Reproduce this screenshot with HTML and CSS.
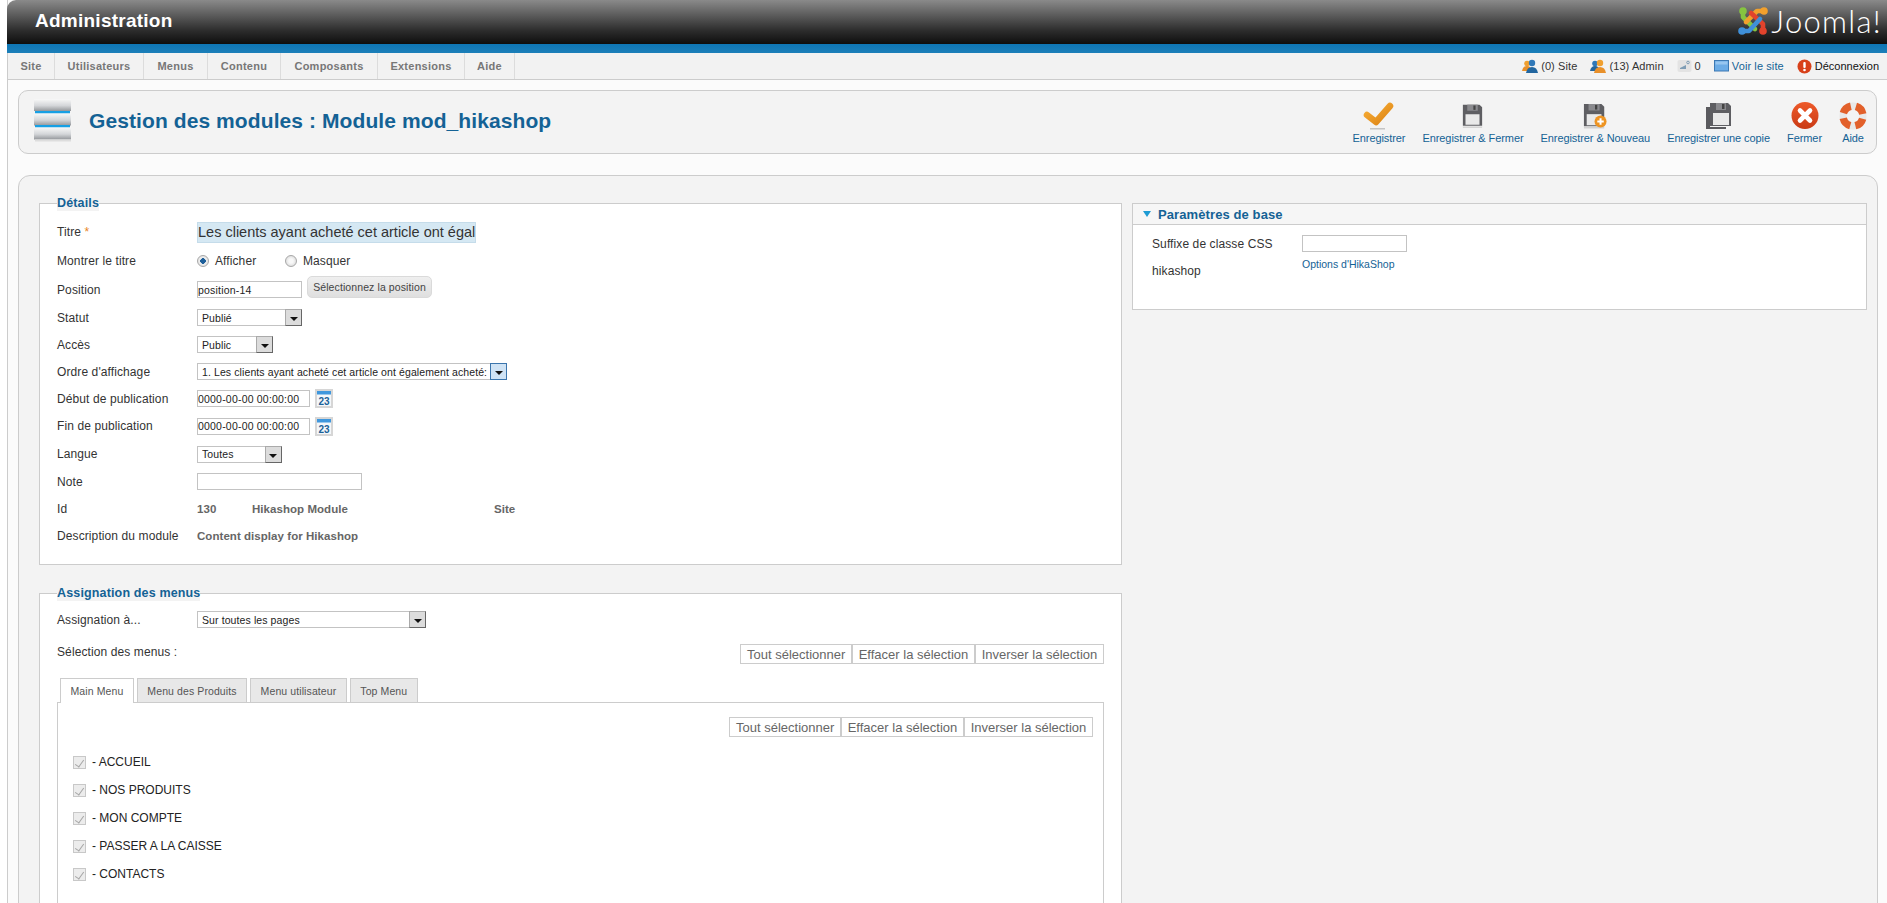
FILE: index.html
```html
<!DOCTYPE html>
<html lang="fr">
<head>
<meta charset="utf-8">
<title>Administration</title>
<link rel="stylesheet" href="styles.css">
</head>
<body>
<div class="page">
  <header class="top">
    <h1 class="brand">Administration</h1>
    <div class="logo">
      <svg class="logo-mark" width="32" height="30" viewBox="0 0 32 30" fill="none" stroke-width="4.6" stroke-linecap="round" stroke-linejoin="round">
        <path d="M6 5 V11 L18 23" stroke="#86c440"/>
        <path d="M27 5 H20 L9 16" stroke="#f2a02c"/>
        <path d="M26 25 V18 L14 7" stroke="#e2432c"/>
        <path d="M5 25 H12 L23 13" stroke="#3f90d9"/>
        <circle cx="6" cy="5" r="3.8" fill="#86c440"/>
        <circle cx="27" cy="5" r="3.8" fill="#f2a02c"/>
        <circle cx="5" cy="25" r="3.8" fill="#3f90d9"/>
        <circle cx="26" cy="25" r="3.8" fill="#e2432c"/>
      </svg>
      <span class="logo-text">Joomla!</span>
    </div>
  </header>
  <div class="stripe"></div>
  <nav class="menubar">
    <ul class="menu">
      <li>Site</li><li>Utilisateurs</li><li>Menus</li><li>Contenu</li><li>Composants</li><li>Extensions</li><li>Aide</li>
    </ul>
    <div class="status">
      <span class="stat">
        <svg width="16" height="15" viewBox="0 0 16 15"><circle cx="5" cy="4.5" r="2.8" fill="#f0a030"/><path d="M0 12 Q1 7 5 7 Q9 7 10 12Z" fill="#e8902a"/><circle cx="10" cy="4" r="3.2" fill="#2f78b8"/><path d="M4 14 Q5 8 10 8 Q15 8 16 14Z" fill="#22669f"/></svg>
        (0) Site
      </span>
      <span class="stat">
        <svg width="16" height="15" viewBox="0 0 16 15"><circle cx="5" cy="4.5" r="2.8" fill="#2f78b8"/><path d="M0 12 Q1 7 5 7 Q9 7 10 12Z" fill="#22669f"/><circle cx="10" cy="4" r="3.2" fill="#f0a030"/><path d="M4 14 Q5 8 10 8 Q15 8 16 14Z" fill="#e8902a"/></svg>
        (13) Admin
      </span>
      <span class="stat">
        <svg width="15" height="14" viewBox="0 0 15 14"><rect x="0.5" y="1" width="14" height="12" rx="2" fill="#e3e3e3"/><path d="M3 9 L9 6 L9 10 L3 10Z" fill="#7f9db5"/><circle cx="11" cy="3.5" r="1.3" fill="none" stroke="#7f9db5"/></svg>
        0
      </span>
      <span class="stat link">
        <svg width="15" height="12" viewBox="0 0 15 12"><rect x="0.5" y="0.5" width="14" height="10.5" fill="#6cace6" stroke="#3c79b4"/><rect x="1.5" y="1.5" width="12" height="3" fill="#97c6f0"/></svg>
        Voir le site
      </span>
      <span class="stat strong">
        <svg width="15" height="15" viewBox="0 0 15 15"><circle cx="7.5" cy="7.5" r="7" fill="#d8411a"/><rect x="6.3" y="3" width="2.4" height="6" rx="1" fill="#fff"/><circle cx="7.5" cy="11" r="1.3" fill="#fff"/></svg>
        Déconnexion
      </span>
    </div>
  </nav>
  <section class="titlebox">
    <div class="title-left">
      <svg class="module-icon" width="38" height="44" viewBox="0 0 38 44">
        <defs><linearGradient id="mg" x1="0" y1="0" x2="0" y2="1"><stop offset="0" stop-color="#f8f8f8"/><stop offset="0.55" stop-color="#d4d6d9"/><stop offset="1" stop-color="#94979b"/></linearGradient></defs>
        <rect x="0" y="0" width="37" height="12" fill="url(#mg)"/>
        <rect x="1" y="12" width="35" height="2.5" fill="#18a0e4"/>
        <rect x="0" y="14.5" width="37" height="12" fill="url(#mg)"/>
        <rect x="1" y="26" width="35" height="2.5" fill="#18a0e4"/>
        <rect x="0" y="28.5" width="37" height="12" fill="url(#mg)"/>
        <rect x="1" y="40.5" width="36" height="2" fill="#ddd"/>
      </svg>
      <h2 class="page-title">Gestion des modules : Module mod_hikashop</h2>
    </div>
    <div class="toolbar">
      <a class="tool">
        <svg width="32" height="28" viewBox="0 0 32 28"><defs><linearGradient id="cg" x1="0" y1="0" x2="1" y2="1"><stop offset="0" stop-color="#f7ad35"/><stop offset="1" stop-color="#dd8415"/></linearGradient></defs><path d="M4 13 L13 20 L27 4" fill="none" stroke="url(#cg)" stroke-width="6.5" stroke-linecap="round" stroke-linejoin="round"/><rect x="7" y="26" width="15" height="1.5" fill="#c4c4c4"/></svg>
        <span>Enregistrer</span>
      </a>
      <a class="tool">
        <svg width="21" height="28" viewBox="0 0 24 28"><path d="M1 1 H20 L23 4 V25 H1Z" fill="#5e5e62"/><rect x="6" y="1" width="12" height="7" fill="#8a8a8e"/><rect x="13" y="2" width="2.5" height="5" fill="#444"/><rect x="4" y="12" width="16" height="12" fill="#e9e9e9"/><rect x="1" y="26" width="22" height="1.5" fill="#cfcfcf"/></svg>
        <span>Enregistrer &amp; Fermer</span>
      </a>
      <a class="tool">
        <svg width="24" height="28" viewBox="0 0 26 28"><path d="M1 1 H20 L23 4 V25 H1Z" fill="#5e5e62"/><rect x="6" y="1" width="12" height="7" fill="#8a8a8e"/><rect x="13" y="2" width="2.5" height="5" fill="#444"/><rect x="4" y="12" width="16" height="12" fill="#e9e9e9"/><rect x="1" y="26" width="22" height="1.5" fill="#cfcfcf"/><circle cx="19" cy="20" r="6.5" fill="#ee9422"/><path d="M19 16.5 V23.5 M15.5 20 H22.5" stroke="#fff" stroke-width="2.2"/></svg>
        <span>Enregistrer &amp; Nouveau</span>
      </a>
      <a class="tool">
        <svg width="26" height="28" viewBox="0 0 26 28"><path d="M0 5 H4 V25 H20 V27 H0Z" fill="#5a5a5e"/><path d="M4 1 H22 L25 4 V24 H4Z" fill="#5e5e62"/><rect x="10" y="1" width="10" height="7" fill="#8a8a8e"/><rect x="16" y="2" width="2.5" height="5" fill="#444"/><rect x="7" y="11" width="16" height="12" fill="#e9e9e9"/></svg>
        <span>Enregistrer une copie</span>
      </a>
      <a class="tool">
        <svg width="30" height="28" viewBox="0 0 30 28"><defs><linearGradient id="xg" x1="0" y1="0" x2="0" y2="1"><stop offset="0" stop-color="#ee5a2a"/><stop offset="1" stop-color="#c93a14"/></linearGradient></defs><circle cx="15" cy="13.5" r="13.5" fill="url(#xg)"/><path d="M10 8.5 L20 18.5 M20 8.5 L10 18.5" stroke="#fff" stroke-width="4.6" stroke-linecap="round"/></svg>
        <span>Fermer</span>
      </a>
      <a class="tool">
        <svg width="28" height="28" viewBox="0 0 28 28"><circle cx="14" cy="14" r="10" fill="none" stroke="#e8e8e8" stroke-width="7"/><circle cx="14" cy="14" r="10" fill="none" stroke="#e2602a" stroke-width="7.5" stroke-dasharray="10.5 5.2" stroke-dashoffset="13"/></svg>
        <span>Aide</span>
      </a>
    </div>
  </section>
  <main class="content">
    <div class="col-left">
      <fieldset class="box">
        <legend>Détails</legend>
        <div class="row row-28"><label>Titre <em>*</em></label><input class="field-title" type="text" value="Les clients ayant acheté cet article ont également acheté:"></div>
        <div class="row row-29"><label>Montrer le titre</label>
          <span class="radios"><input type="radio" name="st" checked><span class="radio-text">Afficher</span><input type="radio" name="st"><span>Masquer</span></span>
        </div>
        <div class="row row-29 row-position"><label>Position</label><input class="text w-pos" type="text" value="position-14"><button class="pick" type="button">Sélectionnez la position</button></div>
        <div class="row"><label>Statut</label><span class="select w-statut"><select><option>Publié</option></select><i class="arrow"></i></span></div>
        <div class="row"><label>Accès</label><span class="select w-acces"><select><option>Public</option></select><i class="arrow"></i></span></div>
        <div class="row"><label>Ordre d'affichage</label><span class="select w-ordre"><select><option>1. Les clients ayant acheté cet article ont également acheté:</option></select><i class="arrow arrow-focus"></i></span></div>
        <div class="row"><label>Début de publication</label><input class="text w-date" type="text" value="0000-00-00 00:00:00"><svg class="cal" width="18" height="19" viewBox="0 0 18 19"><rect width="18" height="19" fill="#d6d6d6"/><rect x="2" y="2" width="14" height="15" fill="#f4f7fa"/><rect x="2" y="2" width="14" height="3.5" fill="#3f97dd"/><text x="9" y="15.5" text-anchor="middle" class="cal-num">23</text></svg></div>
        <div class="row row-28"><label>Fin de publication</label><input class="text w-date" type="text" value="0000-00-00 00:00:00"><svg class="cal" width="18" height="19" viewBox="0 0 18 19"><rect width="18" height="19" fill="#d6d6d6"/><rect x="2" y="2" width="14" height="15" fill="#f4f7fa"/><rect x="2" y="2" width="14" height="3.5" fill="#3f97dd"/><text x="9" y="15.5" text-anchor="middle" class="cal-num">23</text></svg></div>
        <div class="row row-28"><label>Langue</label><span class="select w-langue"><select><option>Toutes</option></select><i class="arrow"></i></span></div>
        <div class="row"><label>Note</label><input class="text w-note" type="text"></div>
        <div class="row"><label>Id</label><span class="val w-id">130</span><span class="val w-type">Hikashop Module</span><span class="val">Site</span></div>
        <div class="row"><label>Description du module</label><span class="val">Content display for Hikashop</span></div>
      </fieldset>
      <fieldset class="box box-menus">
        <legend>Assignation des menus</legend>
        <div class="row row-assign"><label>Assignation à...</label><span class="select w-assign"><select><option>Sur toutes les pages</option></select><i class="arrow"></i></span></div>
        <div class="sel-row">
          <label>Sélection des menus :</label>
          <div class="btn-group"><button type="button">Tout sélectionner</button><button type="button">Effacer la sélection</button><button type="button">Inverser la sélection</button></div>
        </div>
        <ul class="tabs">
          <li class="tab tab-active">Main Menu</li><li class="tab">Menu des Produits</li><li class="tab">Menu utilisateur</li><li class="tab">Top Menu</li>
        </ul>
        <div class="pane">
          <div class="btn-group"><button type="button">Tout sélectionner</button><button type="button">Effacer la sélection</button><button type="button">Inverser la sélection</button></div>
          <ul class="checks">
            <li><input type="checkbox" checked disabled>- ACCUEIL</li>
            <li><input type="checkbox" checked disabled>- NOS PRODUITS</li>
            <li><input type="checkbox" checked disabled>- MON COMPTE</li>
            <li><input type="checkbox" checked disabled>- PASSER A LA CAISSE</li>
            <li><input type="checkbox" checked disabled>- CONTACTS</li>
          </ul>
        </div>
      </fieldset>
    </div>
    <aside class="col-right">
      <div class="panel">
        <h3 class="panel-head"><i class="tri"></i>Paramètres de base</h3>
        <div class="panel-body">
          <div class="p-row p-suffix"><label>Suffixe de classe CSS</label><input class="text w-suffix" type="text"></div>
          <div class="p-row p-hika"><label>hikashop</label><a class="opt">Options d'HikaShop</a></div>
        </div>
      </div>
    </aside>
  </main>
</div>
</body>
</html>
```
FILE: styles.css
```css
* { box-sizing: border-box; }
html, body { margin: 0; height: 100vh; overflow: hidden; background: #fff; }
body { font-family: "Liberation Sans", Arial, sans-serif; font-size: 12px; color: #333; }
ul { list-style: none; margin: 0; padding: 0; }
h1, h2, h3 { margin: 0; }

.page { margin-left: 7px; border-left: 1px solid #ccc; min-height: 100vh; background: #fbfbfb; }

.top { height: 44px; margin-left: -1px; display: flex; justify-content: space-between; align-items: center; border-top-left-radius: 9px; background: linear-gradient(#8a8a8a, #2c2c2c 70%, #0e0e0e); padding: 0 5px 2px 28px; }
.brand { font-size: 19px; font-weight: bold; color: #fff; letter-spacing: 0.25px; }
.logo { display: flex; align-items: center; gap: 2px; }
.logo-text { font-family: Lato, "Open Sans", sans-serif; font-weight: 300; font-size: 31px; line-height: 30px; color: #fff; letter-spacing: 1.3px; }

.stripe { height: 9px; margin-left: -1px; background: linear-gradient(#0e76b5, #1c7fb9); }

.menubar { height: 27px; display: flex; justify-content: space-between; align-items: center; background: #f2f2f2; border-bottom: 1px solid #ccc; padding-right: 8px; }
.menu { display: flex; height: 26px; }
.menu li { display: flex; align-items: center; justify-content: center; font-size: 11px; font-weight: bold; color: #777; letter-spacing: 0.25px; border-right: 1px solid #dcdcdc; }
.menu li:nth-child(1) { width: 47px; }
.menu li:nth-child(2) { width: 89px; }
.menu li:nth-child(3) { width: 64px; }
.menu li:nth-child(4) { width: 73px; }
.menu li:nth-child(5) { width: 97px; }
.menu li:nth-child(6) { width: 87px; }
.menu li:nth-child(7) { width: 50px; }
.status { display: flex; align-items: center; gap: 13px; }
.stat { display: flex; align-items: center; gap: 3px; font-size: 11px; color: #333; letter-spacing: 0.1px; }
.stat.link { color: #146295; }
.stat.strong { color: #111; letter-spacing: 0; }

.titlebox { margin: 10px 10px 0 10px; height: 64px; display: flex; justify-content: space-between; align-items: center; background: #f3f3f3; border: 1px solid #ccc; border-radius: 10px; padding: 0 9px 0 15px; }
.title-left { display: flex; align-items: center; gap: 17px; padding-bottom: 2px; }
.module-icon { display: block; }
.page-title { font-size: 21px; font-weight: bold; color: #146295; letter-spacing: 0.09px; }
.toolbar { display: flex; align-items: flex-start; gap: 17px; padding-top: 2px; }
.tool { display: flex; flex-direction: column; align-items: center; gap: 2px; font-size: 11px; color: #146295; white-space: nowrap; letter-spacing: -0.08px; }
.tool svg { display: block; }

.content { margin: 21px 9px 0 10px; height: 900px; display: flex; gap: 10px; background: #f3f3f3; border: 1px solid #ccc; border-radius: 12px 12px 0 0; padding: 20px 10px 0 20px; }
.col-left { width: 1083px; flex: none; }
.col-right { flex: 1; padding-top: 7px; }

.box { margin: 0; padding: 7px 17px 15px 17px; border: 1px solid #ccc; background: #fff; min-width: 0; }
.box legend { padding: 0; margin-left: 0; font-size: 12.5px; font-weight: bold; color: #146295; line-height: 15px; letter-spacing: 0.15px; background: #f3f3f3; }
.box-menus { margin-top: 21px; padding-top: 5px; padding-bottom: 0; }

.row { display: flex; align-items: center; height: 27px; }
.row-28 { height: 28px; }
.row-29 { height: 29px; }
.row label, .sel-row label { width: 140px; flex: none; letter-spacing: 0.1px; }
.row label em { color: #e8831f; font-style: normal; }

.field-title { width: 279px; height: 21px; padding: 0; border: 1px solid #c5dcea; background: #d5e8f3; font: 14.5px "Liberation Sans", sans-serif; color: #333; }
.text { height: 17px; padding: 0; border: 1px solid #c3c3c3; background: #fff; font: 10.5px "Liberation Sans", sans-serif; color: #222; letter-spacing: 0.2px; }
.w-pos { width: 105px; }
.w-date { width: 113px; }
.w-note { width: 165px; }
.w-suffix { width: 105px; }
.pick { margin-left: 5px; margin-top: -5px; width: 125px; height: 22px; padding: 0; border: 1px solid #dadada; border-radius: 5px; background: linear-gradient(#efefef, #dfdfdf); font: 10.5px "Liberation Sans", sans-serif; color: #444; letter-spacing: 0.1px; }

.radios { display: flex; align-items: center; }
.radios input { appearance: none; width: 12px; height: 12px; margin: 0; border: 1px solid #a8a8a8; border-radius: 50%; background: radial-gradient(circle, #f8f8f8 30%, #d0d0d0 100%); }
.radios input:checked { background: radial-gradient(circle, #1e5f9a 0, #1e5f9a 36%, #f0f0f0 42%, #d8d8d8 100%); }
.radios span { margin-left: 6px; letter-spacing: 0.1px; }
.radio-text { width: 70px; }

.select { display: flex; height: 17px; border: 1px solid #c3c3c3; background: #fff; }
.select select { appearance: none; flex: 1; min-width: 0; height: 15px; padding: 0 0 0 4px; border: 0; background: transparent; font: 10.5px "Liberation Sans", sans-serif; color: #222; letter-spacing: 0.1px; }
.arrow { flex: none; width: 17px; height: 17px; margin: -1px -1px 0 0; display: flex; align-items: center; justify-content: center; padding-top: 3px; background: #dcdcdc; border: 1px solid #999; border-color: #aaa #666 #666 #aaa; }
.arrow::after { content: ""; border: 4px solid transparent; border-top: 4px solid #111; border-bottom: 0; }
.arrow-focus { background: #cfe3f5; border-color: #3b75ad; }
.w-statut { width: 105px; }
.w-acces { width: 76px; }
.w-ordre { width: 310px; }
.w-langue { width: 84.5px; }
.w-assign { width: 229px; }

.cal { margin-left: 5px; }
.cal-num { font: bold 10px "Liberation Sans", sans-serif; fill: #1a6198; }
.val { font-weight: bold; color: #666; letter-spacing: 0.05px; font-size: 11.5px; }
.w-id { width: 55px; }
.w-type { width: 242px; }

.row-assign { height: 27px; }
.sel-row { display: flex; justify-content: space-between; margin-top: 11px; }
.sel-row label { line-height: 14px; margin-top: 1px; }
.btn-group { display: flex; justify-content: flex-end; }
.btn-group button { height: 20px; padding: 0 5.7px; margin: 0; border: 1px solid #ccc; background: #fff; font: 13px "Liberation Sans", sans-serif; color: #666; white-space: nowrap; }

.tabs { display: flex; gap: 3px; margin: 14px 0 0 3px; position: relative; z-index: 1; }
.tab { height: 24px; padding: 0 9.5px; display: flex; align-items: center; border: 1px solid #ccc; border-bottom: 0; background: #e8e8e8; font-size: 10.5px; color: #555; letter-spacing: 0.1px; }
.tab-active { background: #fff; height: 25px; margin-bottom: -1px; }
.pane { height: 400px; border: 1px solid #ccc; padding: 14px 10px 0 15px; background: #fff; }
.checks { margin-top: 11px; }
.checks li { display: flex; align-items: center; height: 28px; font-size: 12px; color: #222; }
.checks input { appearance: none; position: relative; width: 13px; height: 13px; margin: 0 6px 0 0; border: 1px solid #c8c8c8; background: #ececec; }
.checks input::after { content: ""; position: absolute; left: 3px; top: 1px; width: 4px; height: 8px; border: solid #a5a5a5; border-width: 0 1.4px 1.4px 0; transform: rotate(35deg); }

.panel { background: #fff; border: 1px solid #ccc; height: 107px; }
.panel-head { display: flex; align-items: center; height: 21px; padding-left: 10px; background: #f6f6f6; border-bottom: 1px solid #ccc; font-size: 13px; font-weight: bold; color: #146295; letter-spacing: 0.1px; }
.tri { width: 0; height: 0; margin-right: 7px; border: 4px solid transparent; border-top: 6px solid #1e9bd3; border-bottom: 0; }
.panel-body { padding: 10px 0 0 19px; }
.p-row { display: flex; }
.p-row label { width: 150px; flex: none; letter-spacing: 0.1px; }
.p-suffix { align-items: center; height: 17px; }
.p-hika { margin-top: 6px; }
.p-hika label { padding-top: 6px; }
.opt { font-size: 10.5px; color: #146295; }
```
